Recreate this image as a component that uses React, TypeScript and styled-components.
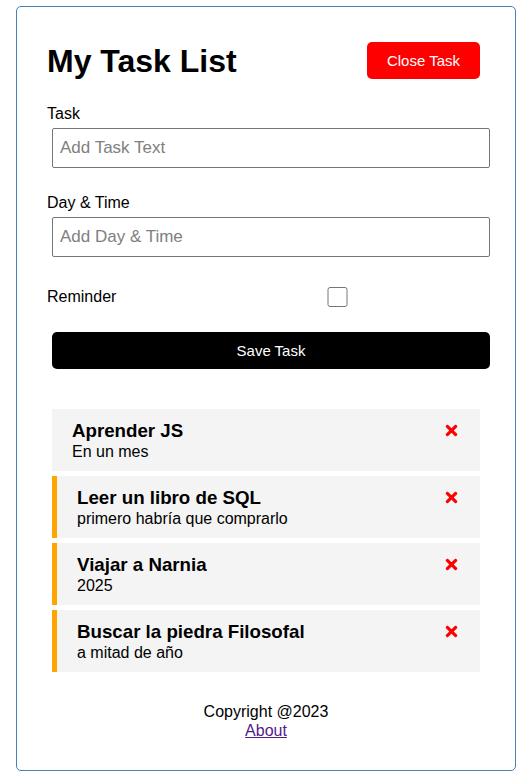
import React from "react";
import styled, { createGlobalStyle } from "styled-components";
import { FaTimes } from "react-icons/fa";

const Global = createGlobalStyle`
  * { box-sizing: border-box; margin: 0; padding: 0; }
  body { background: #fff; font-family: "Liberation Sans", Arial, sans-serif; color: #000; }
`;

const Container = styled.div`
  width: 500px;
  margin: 6px 0 0 16px;
  border: 1px solid steelblue;
  border-radius: 5px;
  padding: 30px;
  min-height: 300px;
`;

const Header = styled.header`
  display: flex;
  justify-content: space-between;
  align-items: center;
  margin-bottom: 20px;
`;

const Title = styled.h1`
  font-size: 32px;
  font-weight: bold;
  padding-top: 2px;
`;

const Button = styled.button<{ $bg: string; $block?: boolean }>`
  display: ${(p) => (p.$block ? "block" : "inline-block")};
  width: ${(p) => (p.$block ? "100%" : "auto")};
  background: ${(p) => p.$bg};
  color: #fff;
  border: none;
  border-radius: 5px;
  margin: 5px;
  padding: 10px 20px;
  font-size: 15px;
  font-family: inherit;
  cursor: pointer;
`;

const Form = styled.form`
  margin-bottom: 40px;
`;

const FormControl = styled.div`
  margin: 20px 0;
`;

const Label = styled.label`
  display: block;
  font-size: 16px;
  line-height: 19px;
`;

const TextInput = styled.input`
  width: 100%;
  height: 40px;
  margin: 5px;
  padding: 3px 7px;
  font-size: 17px;
  font-family: inherit;
  border: 1px solid #767676;
  border-radius: 2px;
  &::placeholder { color: #808080; }
`;

const CheckRow = styled.div`
  display: flex;
  align-items: center;
  margin: 20px 0;
  height: 30px;
`;

const CheckLabel = styled.label`
  flex: 1 1 0;
  font-size: 16px;
`;

const CheckBox = styled.input`
  flex: 2 1 0;
  height: 20px;
  margin: 5px;
`;

const Task = styled.div<{ $reminder?: boolean }>`
  background: #f4f4f4;
  margin: 5px;
  padding: 10px 20px;
  border-left: ${(p) => (p.$reminder ? "5px solid orange" : "none")};
`;

const TaskTitle = styled.h3`
  display: flex;
  align-items: center;
  justify-content: space-between;
  font-size: 18.72px;
  line-height: 23px;
  font-weight: bold;
  & svg { font-size: 17px; margin-top: -1px; }
`;

const TaskDay = styled.p`
  font-size: 16px;
  line-height: 19px;
`;

const Footer = styled.footer`
  margin-top: 30px;
  text-align: center;
  font-size: 16px;
  line-height: 19px;
`;

const Link = styled.a`
  color: #551a8b;
  text-decoration: underline;
`;

const tasks = [
  { text: "Aprender JS", day: "En un mes", reminder: false },
  { text: "Leer un libro de SQL", day: "primero habría que comprarlo", reminder: true },
  { text: "Viajar a Narnia", day: "2025", reminder: true },
  { text: "Buscar la piedra Filosofal", day: "a mitad de año", reminder: true },
];

export default function App() {
  return (
    <>
      <Global />
      <Container>
        <Header>
          <Title>My Task List</Title>
          <Button $bg="red">Close Task</Button>
        </Header>
        <Form onSubmit={(e) => e.preventDefault()}>
          <FormControl>
            <Label>Task</Label>
            <TextInput type="text" placeholder="Add Task Text" />
          </FormControl>
          <FormControl>
            <Label>Day &amp; Time</Label>
            <TextInput type="text" placeholder="Add Day & Time" />
          </FormControl>
          <CheckRow>
            <CheckLabel>Reminder</CheckLabel>
            <CheckBox type="checkbox" />
          </CheckRow>
          <Button $bg="#000" $block type="submit">Save Task</Button>
        </Form>
        <div>
          {tasks.map((t) => (
            <Task key={t.text} $reminder={t.reminder}>
              <TaskTitle>
                {t.text}
                <FaTimes style={{ color: "red" }} />
              </TaskTitle>
              <TaskDay>{t.day}</TaskDay>
            </Task>
          ))}
        </div>
        <Footer>
          <p>Copyright @2023</p>
          <Link href="#about">About</Link>
        </Footer>
      </Container>
    </>
  );
}
